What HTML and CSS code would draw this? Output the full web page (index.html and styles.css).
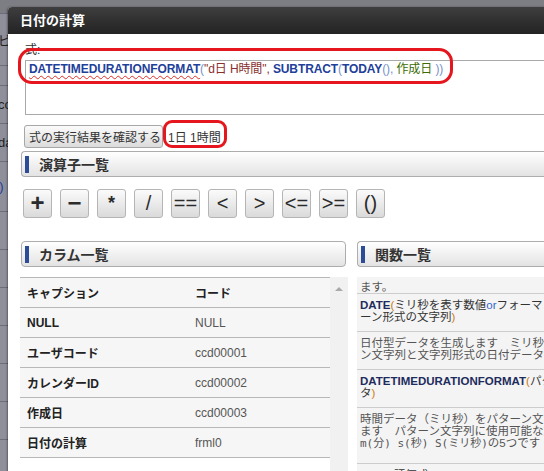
FILE: index.html
```html
<!DOCTYPE html>
<html lang="ja">
<head>
<meta charset="utf-8">
<title>日付の計算</title>
<link rel="stylesheet" href="styles.css">
</head>
<body>
<div class="backdrop">
  <div class="bd-row bd-top"></div>
  <div class="bd-row h51"><span class="bd-text">ビ</span></div>
  <div class="bd-row h20"></div>
  <div class="bd-row h38"><span class="bd-text">co</span></div>
  <div class="bd-row h38"><span class="bd-text">da</span></div>
  <div class="bd-row h44"><span class="bd-text bd-blue">e)</span></div>
  <div class="bd-row h38"></div>
  <div class="bd-row h38"></div>
  <div class="bd-row h38"></div>
  <div class="bd-row h38"></div>
  <div class="bd-row h38"></div>
  <div class="bd-row h38"></div>
</div>

<div class="dialog">
  <div class="titlebar">日付の計算</div>
  <div class="dlg-body">
    <div class="formula">
      <div class="formula-label">式:</div>
      <div class="formula-box"><span class="fn spell">DATETIMEDURATIONFORMAT</span><span class="paren">(</span><span class="str">"d日 H時間", </span><span class="fn">SUBTRACT</span><span class="paren">(</span><span class="fn">TODAY</span><span class="paren">(), </span><span class="col">作成日</span><span class="paren"> ))</span></div>
      <div class="mark mark-formula"></div>
    </div>

    <div class="run-row">
      <button class="btn" type="button">式の実行結果を確認する</button>
      <span class="result">1日 1時間</span>
    </div>

    <div class="sec-head sec-ops">演算子一覧</div>
    <div class="ops">
      <span class="op op-bold">+</span>
      <span class="op op-bold">−</span>
      <span class="op op-star">*</span>
      <span class="op">/</span>
      <span class="op">==</span>
      <span class="op">&lt;</span>
      <span class="op">&gt;</span>
      <span class="op">&lt;=</span>
      <span class="op">&gt;=</span>
      <span class="op">()</span>
    </div>

    <div class="cols">
      <div class="col-left">
        <div class="sec-head sec-col">カラム一覧</div>
        <div class="tbl-wrap">
          <div class="tbl">
            <div class="tr th"><span>キャプション</span><span>コード</span></div>
            <div class="tr"><span class="cap">NULL</span><span class="code">NULL</span></div>
            <div class="tr"><span class="cap">ユーザコード</span><span class="code">ccd00001</span></div>
            <div class="tr"><span class="cap">カレンダーID</span><span class="code">ccd00002</span></div>
            <div class="tr"><span class="cap">作成日</span><span class="code">ccd00003</span></div>
            <div class="tr last"><span class="cap">日付の計算</span><span class="code">frml0</span></div>
          </div>
          <div class="scrollbar"><span class="arrow-up"></span></div>
        </div>
      </div>
      <div class="col-right">
        <div class="sec-head">関数一覧</div>
        <div class="fn-list">
          <div class="fr desc first">ます。</div>
          <div class="fr name"><b>DATE</b><i class="p">(</i>ミリ秒を表す数値<i class="or">or</i>フォーマット形式またはパタ<br>ーン形式の文字列<i class="p">)</i></div>
          <div class="fr desc">日付型データを生成します　ミリ秒を表す数値またはパター<br>ン文字列と文字列形式の日付データを指定します</div>
          <div class="fr name"><b>DATETIMEDURATIONFORMAT</b><i class="p">(</i>パターン文字列, 時間デー<br>タ<i class="p">)</i></div>
          <div class="fr desc tall">時間データ（ミリ秒）をパターン文字列に従ってフォーマットし<br>ます　パターン文字列に使用可能な文字は d(日) H(時)<br><span class="mono">m(分) s(秒) S(ミリ秒)</span>の5つです</div>
          <div class="fr name"><b>EVAL</b><i class="p">(</i>評価式<i class="p">)</i></div>
        </div>
      </div>
    </div>
  </div>
</div>
</body>
</html>
```
FILE: styles.css
```css
* { box-sizing: border-box; }
html, body { margin: 0; padding: 0; }
body {
  width: 544px;
  height: 471px;
  overflow: hidden;
  position: relative;
  background: #8f8f9c;
  font-family: "Liberation Sans", "Noto Sans CJK JP", sans-serif;
  font-size: 12px;
  color: #333;
}

/* page behind the dialog */
.backdrop { display: flex; flex-direction: column; }
.bd-row {
  border-bottom: 1px solid #6c6c7a;
  display: flex;
  align-items: center;
  overflow: hidden;
}
.bd-top { height: 14px; background: #7d7d84; }
.h20 { height: 20px; }
.h38 { height: 38px; }
.h44 { height: 50px; }
.h51 { height: 52px; }
.bd-text {
  margin-left: -2px;
  font-size: 13px;
  color: #222;
  white-space: nowrap;
}
.bd-blue { color: #1b3f9a; margin-left: -8px; }

/* dialog window */
.dialog {
  position: absolute;
  left: 8px;
  top: 7px;
  width: 620px;
  height: 520px;
  background: #fff;
  border-radius: 4px 4px 0 0;
  box-shadow: -1px 0 2px rgba(0, 0, 0, 0.35);
}
.titlebar {
  height: 27px;
  line-height: 27px;
  padding-left: 12px;
  background: linear-gradient(#3e3e3e, #232323);
  color: #fff;
  font-weight: bold;
  font-size: 13px;
  border-radius: 4px 4px 0 0;
}

/* formula */
.formula { position: relative; padding-top: 10px; }
.formula-label { margin-left: 17px; height: 12px; line-height: 12px; color: #333; }
.formula-box {
  margin: 4px 0 0 17px;
  height: 55px;
  border: 1px solid #a9a9a9;
  border-right: 0;
  padding: 0 3px;
  line-height: 16px;
  white-space: nowrap;
  font-size: 12px;
  letter-spacing: -0.1px;
}
.fn { font-weight: bold; color: #22409a; }
.spell { text-decoration: underline wavy #e0302a; text-decoration-thickness: 1px; text-underline-offset: 2px; }
.paren { color: #7792c8; }
.str { color: #8a2f2f; }
.col { color: #3c6b00; }

.mark {
  position: absolute;
  border: 3px solid #e5161e;
  pointer-events: none;
}
.mark-formula {
  left: 10px;
  top: 14px;
  width: 435px;
  height: 36px;
  border-radius: 14px;
}

/* run row */
.run-row {
  margin: 10px 0 0 16px;
  height: 23px;
  display: flex;
  align-items: stretch;
}
.btn {
  height: 23px;
  width: 139px;
  padding: 0 4px;
  border: 1px solid #a7a7a7;
  border-radius: 3px;
  background: linear-gradient(#fbfbfb, #dcdcdc);
  font-family: inherit;
  font-size: 12px;
  color: #333;
  text-align: left;
  white-space: nowrap;
}
.result {
  position: relative;
  margin-left: 5px;
  display: flex;
  align-items: center;
  color: #333;
}
.result::after {
  content: "";
  position: absolute;
  left: -5px;
  right: -6px;
  top: -5px;
  bottom: 0;
  border: 3px solid #e5161e;
  border-radius: 9px;
}

/* section header */
.sec-head {
  height: 26px;
  border: 1px solid #adadad;
  border-radius: 4px;
  background: linear-gradient(#ffffff, #e3e3e3);
  display: flex;
  align-items: center;
  padding-left: 3px;
  font-size: 14px;
  font-weight: bold;
  color: #333;
  white-space: nowrap;
}
.sec-head::before {
  content: "";
  width: 4px;
  height: 17px;
  background: #2c4d95;
  margin-right: 10px;
}
.sec-ops { margin: 3px 0 0 13px; border-right: 0; border-radius: 4px 0 0 4px; }

/* operators */
.ops { display: flex; gap: 8px; margin: 12px 0 0 15px; }
.op {
  width: 29px;
  height: 29px;
  border: 1px solid #b5b5b5;
  border-radius: 3px;
  background: linear-gradient(#fbfbfb, #dadada);
  display: flex;
  align-items: center;
  justify-content: center;
  font-family: "Liberation Sans", sans-serif;
  font-size: 20px;
  font-weight: normal;
  color: #2b2b2b;
  padding-bottom: 1px;
}
.op-bold { font-weight: bold; font-size: 24px; }
.op-star { font-weight: bold; font-size: 18px; padding-bottom: 0; }

/* columns */
.cols { display: flex; margin-top: 23px; padding-left: 12px; }
.col-left { width: 328px; flex: 0 0 328px; }
.sec-col { margin: 0 2px 0 1px; }
.col-right { flex: 0 0 300px; margin-left: 9px; }
.col-right .sec-head { border-right: 0; border-radius: 4px 0 0 4px; }

.tbl-wrap { display: flex; margin-top: 10px; }
.tbl { width: 310px; }
.tr {
  height: 30px;
  border-top: 1px solid #b8b8b8;
  background: #f6f6f6;
  display: grid;
  grid-template-columns: 168px 1fr;
  align-items: center;
  padding-left: 7px;
}
.tr.last { height: 31px; border-bottom: 1px solid #b8b8b8; }
.th span { font-weight: bold; color: #222; }
.cap { font-weight: bold; color: #222; }
.code { color: #555; }
.scrollbar {
  width: 18px;
  height: 194px;
  background: #f1f1f1;
  display: flex;
  justify-content: center;
  padding-top: 10px;
}
.arrow-up {
  width: 0;
  height: 0;
  border-left: 4px solid transparent;
  border-right: 4px solid transparent;
  border-bottom: 4px solid #a9a9a9;
}

/* function list */
.fn-list { margin-top: 10px; font-size: 11.5px; }
.fr {
  background: #f4f4f4;
  border-bottom: 1px solid #cdcdcd;
  padding: 5px 0 8px 3px;
  line-height: 12px;
  white-space: nowrap;
  color: #333;
}
.fr.first { padding: 4px 0 0 3px; }
.fr.tall { padding-bottom: 13px; }
.fr i { font-style: normal; }
.fr b { color: #1d2c5c; }
.desc { color: #555; }
.p { color: #d07a10; }
.or { color: #3366cc; }
.mono { font-family: "DejaVu Sans Mono", "Noto Sans CJK JP", monospace; font-size: 11px; }
```
